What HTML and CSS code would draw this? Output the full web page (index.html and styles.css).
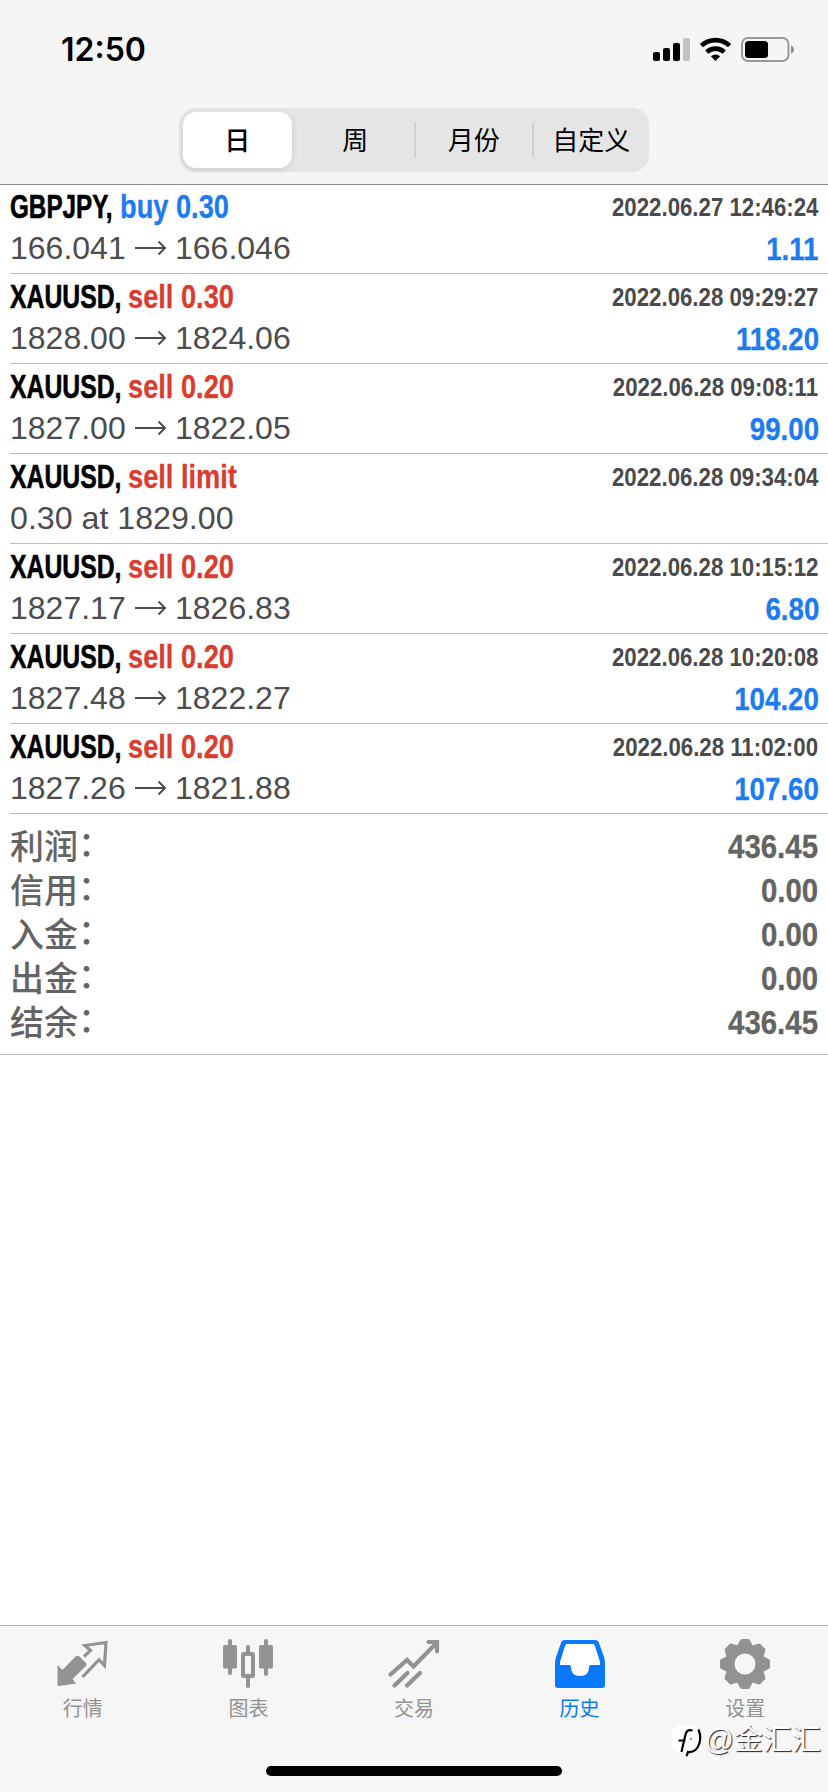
FILE: index.html
```html
<!DOCTYPE html>
<html lang="zh-CN">
<head>
<meta charset="utf-8">
<title>历史</title>
<link rel="stylesheet" href="styles.css">
</head>
<body>
<div class="screen">
  <header class="header">
    <div class="status">
      <span class="clock">12:50</span>
      <svg class="status-icons" width="144" height="28" viewBox="652 36 144 28">
        <rect x="653" y="52" width="7" height="9" rx="2"/>
        <rect x="663" y="48" width="7" height="13" rx="2"/>
        <rect x="673" y="43" width="7" height="18" rx="2"/>
        <rect x="683" y="38" width="7" height="23" rx="2" fill="#c2c2c2"/>
        <g fill="none" stroke="#000" stroke-width="4.600">
          <path d="M701.400 45.700a20.500 20.500 0 0 1 28.200 0"/>
          <path d="M706.800 52.100a12.500 12.500 0 0 1 17.400 0"/>
        </g>
        <path d="M715.500 61l-4.600-4.700q4.600-3.500 9.200 0z"/>
        <rect x="742" y="38" width="46.500" height="23" rx="6" fill="none" stroke="#999" stroke-width="2"/>
        <rect x="745" y="41" width="23" height="17" rx="3.500"/>
        <path d="M791 45.500q3 1 3 4t-3 4z" fill="#8e8e8e"/>
      </svg>
    </div>
    <nav class="segments">
      <span class="segment selected">日</span>
      <span class="segment">周</span>
      <span class="segment ruled">月份</span>
      <span class="segment ruled">自定义</span>
    </nav>
  </header>

  <main class="content">
    <section class="deals">
      <article class="deal">
        <div class="line"><b class="symbol gbp">GBPJPY,</b><b class="side buy">buy 0.30</b><b class="time">2022.06.27 12:46:24</b></div>
        <div class="line prices"><span class="price">166.041</span><svg class="arrow" viewBox="0 0 32 16"><path d="M0 8H30M23.500 1.500L30 8l-6.500 6.500"/></svg><span class="price">166.046</span><b class="profit">1.11</b></div>
      </article>
      <article class="deal">
        <div class="line"><b class="symbol">XAUUSD,</b><b class="side sell">sell 0.30</b><b class="time">2022.06.28 09:29:27</b></div>
        <div class="line prices"><span class="price">1828.00</span><svg class="arrow" viewBox="0 0 32 16"><path d="M0 8H30M23.500 1.500L30 8l-6.500 6.500"/></svg><span class="price">1824.06</span><b class="profit">118.20</b></div>
      </article>
      <article class="deal">
        <div class="line"><b class="symbol">XAUUSD,</b><b class="side sell">sell 0.20</b><b class="time">2022.06.28 09:08:11</b></div>
        <div class="line prices"><span class="price">1827.00</span><svg class="arrow" viewBox="0 0 32 16"><path d="M0 8H30M23.500 1.500L30 8l-6.500 6.500"/></svg><span class="price">1822.05</span><b class="profit">99.00</b></div>
      </article>
      <article class="deal">
        <div class="line"><b class="symbol">XAUUSD,</b><b class="side sell">sell limit</b><b class="time">2022.06.28 09:34:04</b></div>
        <div class="line prices"><span class="order">0.30 at 1829.00</span></div>
      </article>
      <article class="deal">
        <div class="line"><b class="symbol">XAUUSD,</b><b class="side sell">sell 0.20</b><b class="time">2022.06.28 10:15:12</b></div>
        <div class="line prices"><span class="price">1827.17</span><svg class="arrow" viewBox="0 0 32 16"><path d="M0 8H30M23.500 1.500L30 8l-6.500 6.500"/></svg><span class="price">1826.83</span><b class="profit">6.80</b></div>
      </article>
      <article class="deal">
        <div class="line"><b class="symbol">XAUUSD,</b><b class="side sell">sell 0.20</b><b class="time">2022.06.28 10:20:08</b></div>
        <div class="line prices"><span class="price">1827.48</span><svg class="arrow" viewBox="0 0 32 16"><path d="M0 8H30M23.500 1.500L30 8l-6.500 6.500"/></svg><span class="price">1822.27</span><b class="profit">104.20</b></div>
      </article>
      <article class="deal">
        <div class="line"><b class="symbol">XAUUSD,</b><b class="side sell">sell 0.20</b><b class="time">2022.06.28 11:02:00</b></div>
        <div class="line prices"><span class="price">1827.26</span><svg class="arrow" viewBox="0 0 32 16"><path d="M0 8H30M23.500 1.500L30 8l-6.500 6.500"/></svg><span class="price">1821.88</span><b class="profit">107.60</b></div>
      </article>
    </section>

    <section class="summary">
      <div class="total"><span class="label">利润<span class="colon">：</span></span><b class="amount">436.45</b></div>
      <div class="total"><span class="label">信用<span class="colon">：</span></span><b class="amount">0.00</b></div>
      <div class="total"><span class="label">入金<span class="colon">：</span></span><b class="amount">0.00</b></div>
      <div class="total"><span class="label">出金<span class="colon">：</span></span><b class="amount">0.00</b></div>
      <div class="total"><span class="label">结余<span class="colon">：</span></span><b class="amount">436.45</b></div>
    </section>
  </main>

  <footer class="footer">
    <nav class="tabs">
      <a class="tab">
        <svg class="icon" viewBox="0 0 52 52">
          <path fill="currentColor" d="M.5 27l5 5L18.500 18.500q2-1.500 4 0L29 25q1 1.500 0 3L15.500 41l3.500 4.500-17 2.500q-1.500 0-1.500-1.500z"/>
          <path fill="none" stroke="currentColor" stroke-width="3.200" d="M27 18.500l6.500-6-5.500-5L49 4.500 47.500 27.500l-5.500-5.800L25.500 39"/>
        </svg>
        <span>行情</span>
      </a>
      <a class="tab">
        <svg class="icon" viewBox="0 0 52 52" fill="currentColor">
          <rect x="1" y="7" width="14" height="23.500" rx="2"/><rect x="6" y="1" width="4" height="36" rx="2"/>
          <rect x="37" y="7" width="14" height="23.500" rx="2"/><rect x="42" y="1" width="4" height="37" rx="2"/>
          <rect x="24" y="7" width="4" height="9" rx="2"/><rect x="24" y="37" width="4" height="13" rx="2"/>
          <rect x="21" y="16" width="10" height="22" rx="1" fill="none" stroke="currentColor" stroke-width="4"/>
        </svg>
        <span>图表</span>
      </a>
      <a class="tab">
        <svg class="icon" viewBox="0 0 52 52" fill="none" stroke="currentColor" stroke-width="4.200" stroke-linecap="round">
          <path d="M2.500 36.500L19 22l6.500 6.500L48.500 5"/>
          <path d="M40.500 4H49v9.500"/>
          <path d="M6.500 47.500L19.500 35M19 47.500L32 35"/>
        </svg>
        <span>交易</span>
      </a>
      <a class="tab active">
        <svg class="icon" viewBox="0 0 52 52">
          <path fill="currentColor" d="M11 2H41Q44 2 45 5L50 19Q51 22 51 26V47Q51 50 48 50H4Q1 50 1 47V26Q1 22 2 19L7 5Q8 2 11 2z"/>
          <path fill="#fff" d="M13 6H39Q40.500 6 41 8L46 24V27H37Q35 27 35 29 35 38 26 38T17 29Q17 27 15 27H6V24L11 8Q11.500 6 13 6z"/>
        </svg>
        <span>历史</span>
      </a>
      <a class="tab">
        <svg class="icon" viewBox="-26 -26 52 52">
          <g fill="currentColor">
            <circle r="19"/>
            <path id="tooth" d="M-8.500 -17L-5 -23.500Q-4.500 -25 -3 -25H3Q4.500 -25 5 -23.500L8.500 -17V17L5 23.500Q4.500 25 3 25H-3Q-4.500 25 -5 23.500L-8.500 17z"/>
            <use href="#tooth" transform="rotate(45)"/>
            <use href="#tooth" transform="rotate(90)"/>
            <use href="#tooth" transform="rotate(135)"/>
          </g>
          <circle r="10.500" fill="#f6f6f6"/>
        </svg>
        <span>设置</span>
      </a>
    </nav>
    <div class="home"></div>
    <div class="watermark">
      <svg width="32" height="34" viewBox="0 0 32 34">
        <rect x="1" y="1" width="28" height="28" rx="9" fill="#fff"/>
        <path d="M21.500 6.500q-5-1.500-6.500 2.500-1.500 5-4.500 19M7.500 16.500h7M27.500 5.500q4 10-1 18-3 5-9.500 4.500l-1.500 4" fill="none" stroke="#000" stroke-width="2.200"/>
        <circle cx="20" cy="15" r=".8"/>
      </svg>
      <span>@金汇汇</span>
    </div>
  </footer>
</div>
</body>
</html>
```
FILE: styles.css
```css
* { box-sizing: border-box; }
body { margin: 0; background: #fff; font-family: "Liberation Sans", "Noto Sans CJK SC", sans-serif; }
.screen { width: 828px; height: 1792px; display: flex; flex-direction: column; overflow: hidden; }

.header { height: 185px; background: #f5f5f5; border-bottom: 1px solid #8c8c8c; display: flex; flex-direction: column; align-items: center; }
.status { width: 100%; height: 108px; padding: 36px 32px 0 61px; display: flex; justify-content: space-between; align-items: flex-start; }
.clock { font: 600 32px/28px Inter, sans-serif; }
.segments { width: 470px; height: 64px; padding: 4px 0; display: grid; grid-template-columns: repeat(4, 1fr); align-items: center; border-radius: 17px; background: #e5e5e5; font: 26px/33px "Noto Sans CJK SC", sans-serif; text-align: center; }
.segment { height: 36px; }
.ruled { border-left: 2px solid #cfcfcf; }
.selected { height: 56px; margin: 0 5px 0 4px; line-height: 53px; border-radius: 13px; background: #fff; font-weight: 500; box-shadow: 0 2px 6px #0000001c; }

.content { flex: 1; }
.deals { padding-left: 10px; }
.deal { height: 90px; border-bottom: 1px solid #bdbdbf; font-size: 32px; }
.deal:first-child { height: 89px; }
.deal:first-child .line:first-child { height: 43px; padding-top: 1px; }
.line { height: 44px; padding: 2px 10px 0 0; display: flex; align-items: center; white-space: nowrap; }
.prices { height: 40px; padding: 0 10px 0 0; color: #4c4c4e; }
.symbol { width: 118px; font-size: 33px; color: #000; transform: scaleX(.75); transform-origin: left; -webkit-text-stroke: .6px; }
.gbp { width: 110px; transform: scaleX(.735); }
.side { flex: 1; width: 0; font-size: 33px; transform: scaleX(.825); transform-origin: left; -webkit-text-stroke: .3px; }
.buy { color: #1d7bf2; }
.sell { color: #da3c30; }
.time { font-size: 26px; color: #4a4a4c; transform: scaleX(.855); transform-origin: right; }
.price { width: 116px; }
.arrow { width: 32px; height: 16px; margin: 0 8px 0 9px; fill: none; stroke: #4c4c4e; stroke-width: 2; }
.order { transform: scaleX(1.005); transform-origin: left; }
.profit { margin: 2px -1px 0 auto; color: #1d7bf2; transform: scaleX(.865); transform-origin: right; -webkit-text-stroke: .3px; }

.summary { height: 241px; padding: 10px 10px 0; border-bottom: 1px solid #bdbdbf; color: #646464; }
.total { height: 44px; display: flex; justify-content: space-between; align-items: center; }
.label { margin-top: 2px; font: 500 34px/44px "Liberation Sans", "Noto Sans CJK SC", sans-serif; }
.colon { position: relative; top: -3px; }
.amount { margin-top: 1px; font-size: 34px; transform: scaleX(.865); transform-origin: right; -webkit-text-stroke: .3px; }

.footer { position: relative; height: 167px; border-top: 1px solid #b2b2b2; background: #f6f6f6; }
.tabs { height: 140px; padding-top: 12px; display: grid; grid-template-columns: repeat(5, 1fr); }
.tab { display: flex; flex-direction: column; align-items: center; color: #929292; font: 20px/28px "Liberation Sans", "Noto Sans CJK SC", sans-serif; }
.icon { width: 52px; height: 52px; margin-bottom: 5px; }
.active { color: #0a78fa; }
.home { width: 296px; height: 10px; margin: 0 auto; border-radius: 5px; background: #000; }
.watermark { position: absolute; right: 7px; top: 100px; display: flex; align-items: center; gap: 2px; color: #fff; font: 29px/34px "Liberation Sans", "Noto Sans CJK SC", sans-serif; text-shadow: 1px 1px 1px #222; }
.watermark svg { margin-top: -2px; }
.watermark span { margin-top: -4px; }
```
